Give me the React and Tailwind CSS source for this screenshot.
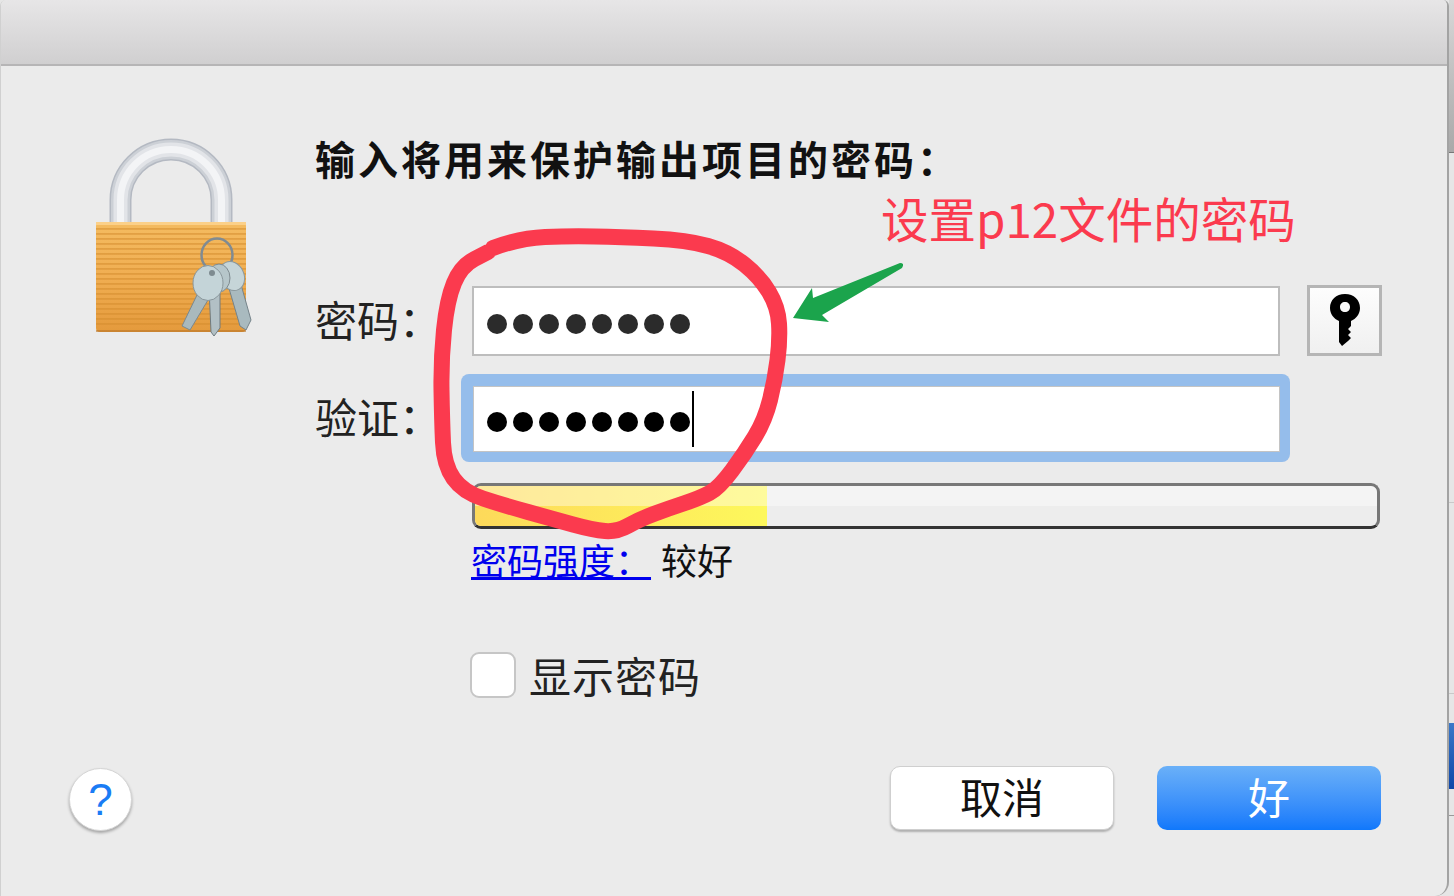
import React from "react";

const CJK = { fontFamily: '"Noto Sans CJK SC", "Liberation Sans", sans-serif' };

const loop = [
  [493, 248], [520, 238], [570, 236], [620, 237], [687, 240], [729, 252], [760, 277], [778, 307], [780, 340],
  [775, 380], [765, 420], [745, 453], [719, 488], [700, 498], [670, 508], [640, 519], [617, 532], [593, 530],
  [553, 519], [503, 505], [463, 492], [444, 465], [442, 420], [441, 360], [447, 300], [461, 266], [488, 252],
];

function smooth(points) {
  let d = `M${points[0][0]} ${points[0][1]}`;
  for (let i = 1; i < points.length - 1; i++) {
    const mx = (points[i][0] + points[i + 1][0]) / 2;
    const my = (points[i][1] + points[i + 1][1]) / 2;
    d += ` Q${points[i][0]} ${points[i][1]} ${mx} ${my}`;
  }
  const last = points[points.length - 1];
  return d + ` L${last[0]} ${last[1]}`;
}

function Lock() {
  const stripes = [];
  for (let y = 228; y < 328; y += 5) stripes.push(y);
  const shackle = "M120.5 226 V200 A50.5 50.5 0 0 1 221.5 200 V226";
  return (
    <svg width="170" height="210" viewBox="90 130 170 210">
      <defs>
        <linearGradient id="bd" x1="0" y1="0" x2="0" y2="1">
          <stop offset="0" stopColor="#f4bb60" />
          <stop offset="0.5" stopColor="#f0ae52" />
          <stop offset="1" stopColor="#e49a3c" />
        </linearGradient>
      </defs>
      <path d={shackle} fill="none" stroke="#b4b9c2" strokeWidth="22" />
      <path d={shackle} fill="none" stroke="#ccd0d6" strokeWidth="19" />
      <path d={shackle} fill="none" stroke="#e2e4e8" strokeWidth="14" />
      <path d={shackle} fill="none" stroke="#f3f4f6" strokeWidth="7" />
      <rect x="96" y="222" width="150" height="110" rx="4" fill="url(#bd)" />
      <rect x="96" y="222" width="150" height="3" fill="#fbd089" />
      {stripes.map((y) => (
        <rect key={y} x="96" y={y} width="150" height="1.8" fill="#d38c2e" opacity="0.55" />
      ))}
      <rect x="96" y="330" width="150" height="2" fill="#b9772a" opacity="0.6" />
      <ellipse cx="217" cy="255" rx="15.5" ry="16.5" fill="none" stroke="#808b92" strokeWidth="2.5" />
      <path d="M228 285 L240 281 L251 320 L246 330 L240 326 Z" fill="#a9babf" stroke="#75838a" strokeWidth="1" />
      <ellipse cx="232" cy="276" rx="12" ry="15" transform="rotate(-25 232 276)" fill="#c6d5d8" stroke="#8b989d" strokeWidth="1" />
      <path d="M209 288 L220 288 L220 328 L214 336 L211 332 Z" fill="#b2c0c5" stroke="#6f7b80" strokeWidth="1" />
      <ellipse cx="219" cy="278" rx="11" ry="14" fill="#b6c6ca" stroke="#7f8b90" strokeWidth="1" />
      <path d="M197 295 L208 300 L190 330 L182 326 Z" fill="#a9b9bd" stroke="#7c898e" strokeWidth="1" />
      <ellipse cx="208" cy="283" rx="15" ry="17.5" fill="#c4d4d8" stroke="#8a979c" strokeWidth="1" />
      <circle cx="212" cy="273" r="3" fill="#7e8b90" />
    </svg>
  );
}

function Dots({ color }) {
  return (
    <div className="flex gap-[6.2px] pt-[6px]">
      {[0, 1, 2, 3, 4, 5, 6, 7].map((i) => (
        <span key={i} className="w-[20px] h-[20px] rounded-full" style={{ background: color }} />
      ))}
    </div>
  );
}

export default function App() {
  return (
    <div className="relative w-[1454px] h-[896px] overflow-hidden bg-[#e6e6e6] flex" style={CJK}>
      <div className="w-[1449px] h-full shrink-0 overflow-hidden rounded-t-[6px] rounded-br-[14px] bg-[#ebebeb] border-l border-r-2 border-l-[#d0d0d0] border-r-[#a3a3a3] flex flex-col">
        <div className="h-[66px] shrink-0 border-b-2 border-[#b6b5b6] bg-gradient-to-b from-[#e7e6e7] to-[#d0cfd0]" />

        <div className="flex-1 flex min-h-0">
          <div className="w-[89px] shrink-0" />
          <div className="w-[215px] shrink-0 pt-[64px]">
            <Lock />
          </div>

          <div className="flex-1 flex flex-col pt-[62px]">
            <div className="pl-[10px] h-[60px] flex items-center text-[40px] leading-[60px] font-bold text-[#111] tracking-[3px] whitespace-nowrap">
              输入将用来保护输出项目的密码：
            </div>

            <div className="mt-[98px] flex items-center pl-[10px] h-[70px]">
              <div className="w-[157px] pb-[4px] text-[42px] leading-[60px] text-[#222]">密码：</div>
              <div className="w-[808px] h-[70px] bg-white border-2 border-[#bdbdbd] pl-[13px] flex items-center">
                <Dots color="#2b2b2b" />
              </div>
              <div className="ml-[27px] w-[75px] h-[71px] -mt-[2px] border-[3px] border-[#b5b5b5] bg-gradient-to-b from-[#fdfdfd] to-[#f0f0f0] flex items-center justify-center">
                <svg width="34" height="54" viewBox="0 0 34 54">
                  <path fillRule="evenodd" d="M17 1 C26 1 32 7 32 15 C32 21 28 26 23 28 V33 L20 36 L23 39 L20 42 L23 45 L20 48 L14 53 L11 49 V28 C6 26 2 21 2 15 C2 7 8 1 17 1 Z M17 9 C14 9 12 11 12 14 C12 17 14 19 17 19 C20 19 22 17 22 14 C22 11 20 9 17 9 Z" fill="#000" />
                </svg>
              </div>
            </div>

            <div className="mt-[18px] flex items-start pl-[10px] h-[90px]">
              <div className="w-[146px] pt-[12px] text-[42px] leading-[60px] text-[#222]">验证：</div>
              <div className="w-[829px] h-[88px] rounded-[8px] bg-[#95bdeb] pl-[12px] pr-[10px] pt-[12px] pb-[10px]">
                <div className="h-full bg-white border border-[#c4c4c4] pl-[13px] flex items-center">
                  <Dots color="#000" />
                  <span className="ml-[2px] w-[2px] h-[56px] bg-black" />
                </div>
              </div>
            </div>

            <div className="mt-[19px] ml-[167px] w-[908px] h-[46px] rounded-[9px] border-[3px] border-[#777777] border-b-[#333333] bg-[#ededed] overflow-hidden relative">
              <div className="absolute inset-y-0 left-0 w-[292px] bg-gradient-to-r from-[#fdd95a] to-[#fdf85c]" />
              <div className="absolute inset-x-0 top-0 h-[20px] bg-white opacity-40" />
            </div>

            <div className="ml-[166px] mt-[5px] flex items-center text-[36px] leading-[50px] whitespace-nowrap">
              <span className="text-[#0000ee] underline w-[180px]">密码强度： </span>
              <span className="ml-[10px] text-[#111]">较好</span>
            </div>

            <div className="ml-[165px] mt-[64px] flex items-center">
              <span className="w-[46px] h-[46px] rounded-[9px] bg-white border-2 border-[#c6c6c6]" />
              <span className="ml-[13px] text-[42px] leading-[54px] text-[#222] tracking-[1px]">显示密码</span>
            </div>

            <div className="mt-[64px] flex pl-[585px] gap-[43px]">
              <button className="w-[224px] h-[64px] pb-[5px] rounded-[10px] bg-white border border-[#cfcfcf] shadow-[0_2px_2px_rgba(0,0,0,0.25)] text-[42px] leading-[56px] text-[#111]">取消</button>
              <button className="w-[224px] h-[64px] pb-[5px] rounded-[10px] bg-gradient-to-b from-[#6ab0f8] to-[#0f78fb] text-[42px] leading-[56px] text-white">好</button>
            </div>
          </div>
        </div>
      </div>

      <div className="flex-1 flex flex-col">
        <div className="h-[153px] bg-gradient-to-b from-[#d8d8d8] to-[#a9a9a9] border-b border-[#777777]" />
        <div className="h-[350px] border-b border-[#c9c9c9]" />
        <div className="h-[191px] border-b border-[#c9c9c9]" />
        <div className="h-[29px]" />
        <div className="h-[66px] bg-gradient-to-b from-[#3b78c8] to-[#0f47a8]" />
        <div className="h-[27px] border-b border-[#999999]" />
      </div>

      <div className="absolute left-[69px] top-[768px] w-[63px] h-[63px] rounded-full bg-white border border-[#d5d5d5] shadow-[0_2px_3px_rgba(0,0,0,0.3)] flex items-center justify-center text-[44px] leading-none text-[#1a7cf5]" style={{ fontFamily: '"Liberation Sans", sans-serif' }}>?</div>

      <div className="absolute left-[881px] top-[187px] text-[47.5px] leading-[62px] text-[#fb3a4e] whitespace-nowrap">设置p12文件的密码</div>

      <svg className="absolute left-0 top-0 pointer-events-none" width="1454" height="896" viewBox="0 0 1454 896">
        <path d={smooth(loop)} fill="none" stroke="#fb3a4e" strokeWidth="16" strokeLinejoin="round" strokeLinecap="round" />
        <path d="M900 263 L813 298 L812 288 L793 318 L829 322 L822 315 L902 268 Q905 263 900 263 Z" fill="#1ba44c" />
      </svg>
    </div>
  );
}
